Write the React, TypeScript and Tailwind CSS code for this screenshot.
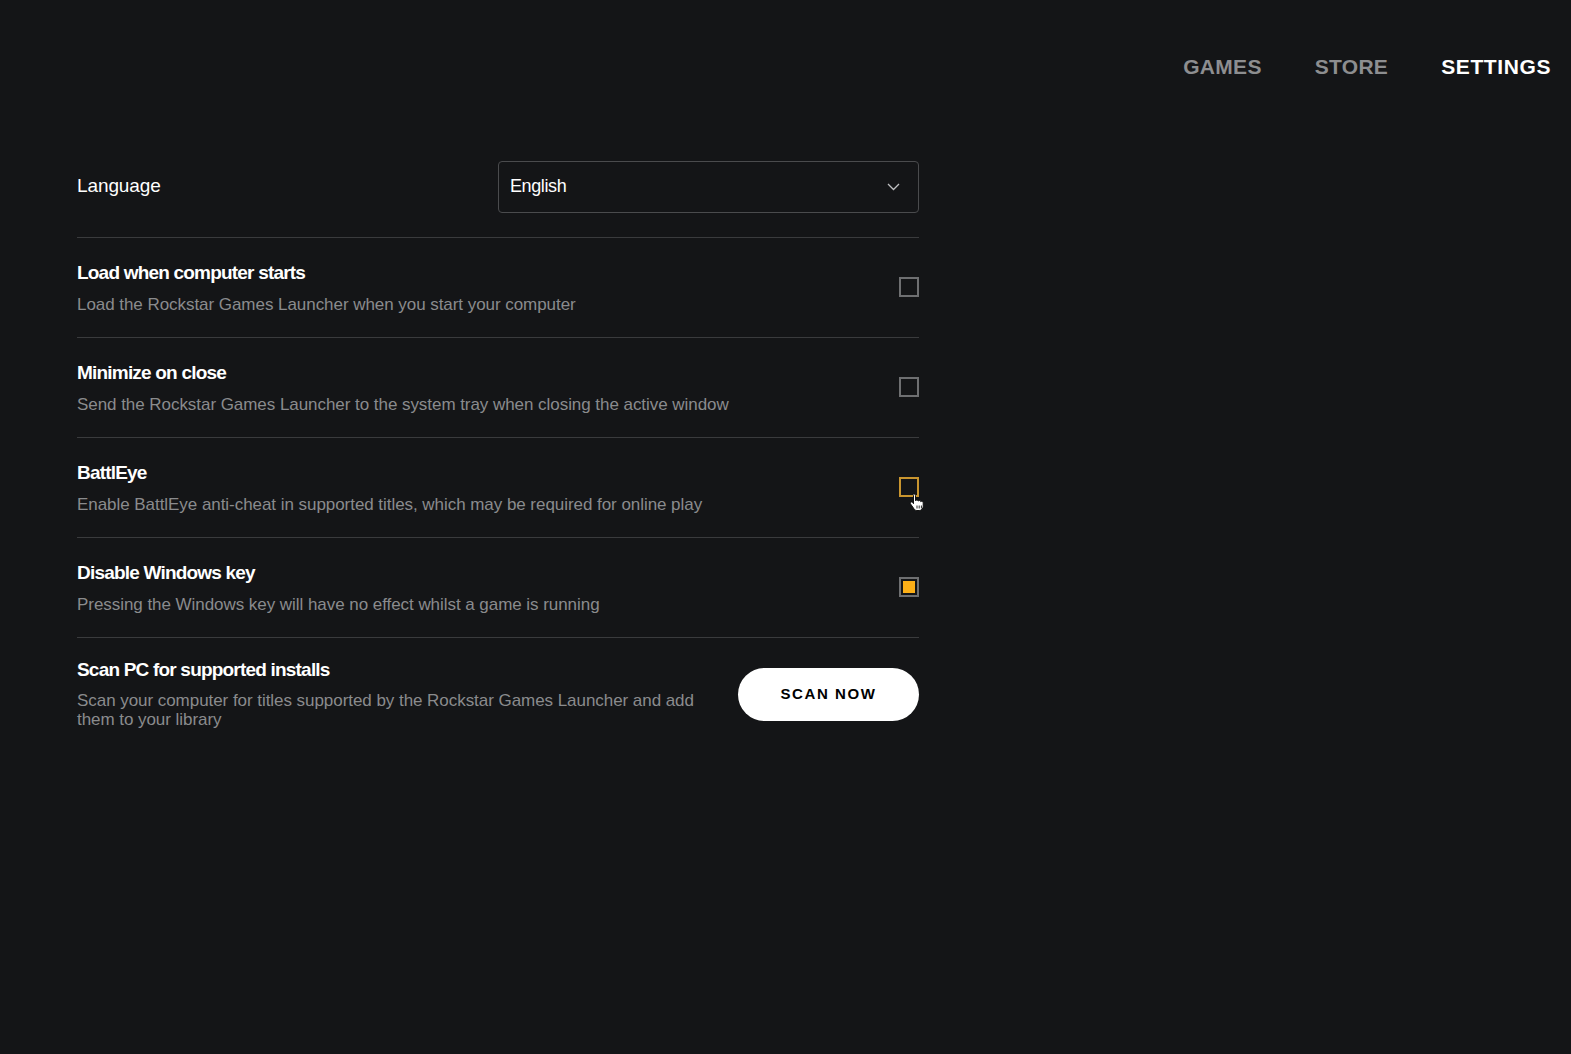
import { useState } from "react"

type Row = {
  title: string
  desc: string
  checked: boolean
  focus?: boolean
}

const rows: Row[] = [
  { title: "Load when computer starts", desc: "Load the Rockstar Games Launcher when you start your computer", checked: false },
  { title: "Minimize on close", desc: "Send the Rockstar Games Launcher to the system tray when closing the active window", checked: false },
  { title: "BattlEye", desc: "Enable BattlEye anti-cheat in supported titles, which may be required for online play", checked: false, focus: true },
  { title: "Disable Windows key", desc: "Pressing the Windows key will have no effect whilst a game is running", checked: true },
]

function Check({ checked, focus, onClick }: { checked: boolean; focus?: boolean; onClick: () => void }) {
  return (
    <button
      onClick={onClick}
      className={
        "relative w-[20px] h-[20px] border-2 flex items-center justify-center shrink-0 " +
        (focus ? "border-[#c9952f]" : "border-[#6e6f71]")
      }
    >
      {checked && <span className="w-[12px] h-[12px] bg-[#fcaf17]" />}
      {focus && (
        // mouse pointer (hand) hovering the box
        <svg className="absolute left-[8px] top-[14px]" width="17" height="19" viewBox="0 0 17 19">
          <path
            d="M5 1c.9 0 1.5.6 1.5 1.5v5.3c.2-.5.7-.8 1.3-.8.7 0 1.3.5 1.4 1.1.3-.4.7-.6 1.2-.6.7 0 1.3.5 1.4 1.2.3-.3.6-.4 1-.4.8 0 1.4.6 1.4 1.4v3.6c0 2.4-1.7 4.2-4 4.2H8c-1.2 0-2.2-.5-2.9-1.5L1.6 11c-.4-.6-.3-1.4.3-1.8.6-.4 1.3-.3 1.7.3l.9 1.2V2.5C3.5 1.6 4.1 1 5 1z"
            fill="#fff"
            stroke="#111"
            strokeWidth="1"
          />
          <path d="M8 12.5v3M10.2 12.5v3M12.4 12.5v3" stroke="#111" strokeWidth="0.9" />
        </svg>
      )}
    </button>
  )
}

export default function App() {
  const [checks, setChecks] = useState(rows.map((r) => r.checked))

  return (
    <main className="min-h-screen w-full bg-[#141517] text-white font-['Liberation_Sans',Arial,sans-serif]">
      <nav className="flex justify-end gap-[53px] pt-[51px] pr-[20px] text-[21px] font-bold tracking-[0.3px]">
        <a className="text-[#8d8e90]">GAMES</a>
        <a className="text-[#8d8e90]">STORE</a>
        <a className="text-white tracking-[0.6px]">SETTINGS</a>
      </nav>

      <section className="ml-[77px] mt-[78px] w-[842px]">
        <div className="flex items-center justify-between pb-[24px] border-b border-[#3a3b3d]">
          <span className="text-[19px] tracking-[-0.1px]">Language</span>
          <div className="flex items-center justify-between w-[421px] h-[52px] rounded-[4px] border border-[#4a4b4d] pl-[11px] pr-[18px]">
            <span className="text-[18px] tracking-[-0.4px]">English</span>
            <svg width="13" height="8" viewBox="0 0 13 8" fill="none">
              <path d="M1 1l5.5 5.5L12 1" stroke="#bfc0c2" strokeWidth="1.3" />
            </svg>
          </div>
        </div>

        {rows.map((r, i) => (
          <div key={r.title} className="flex items-center justify-between h-[100px] border-b border-[#3a3b3d]">
            <div className="flex flex-col gap-[9px] mt-[2px]">
              <span className="text-[19px] font-bold tracking-[-0.8px] leading-[24px]">{r.title}</span>
              <span className="text-[17px] text-[#8a8b8d] tracking-[-0.05px] leading-[22px]">{r.desc}</span>
            </div>
            <Check
              checked={checks[i]}
              focus={r.focus}
              onClick={() => setChecks(checks.map((c, j) => (j === i ? !c : c)))}
            />
          </div>
        ))}

        <div className="flex items-start justify-between pt-[20px]">
          <div className="flex flex-col gap-[9px] w-[630px]">
            <span className="text-[19px] font-bold tracking-[-0.8px] leading-[24px]">Scan PC for supported installs</span>
            <span className="text-[17px] text-[#8a8b8d] tracking-[-0.05px] leading-[19px]">
              Scan your computer for titles supported by the Rockstar Games Launcher and add them to your library
            </span>
          </div>
          <button className="mt-[10px] w-[181px] h-[53px] rounded-full bg-white text-black text-[15px] font-bold tracking-[1.6px]">
            SCAN NOW
          </button>
        </div>
      </section>
    </main>
  )
}
